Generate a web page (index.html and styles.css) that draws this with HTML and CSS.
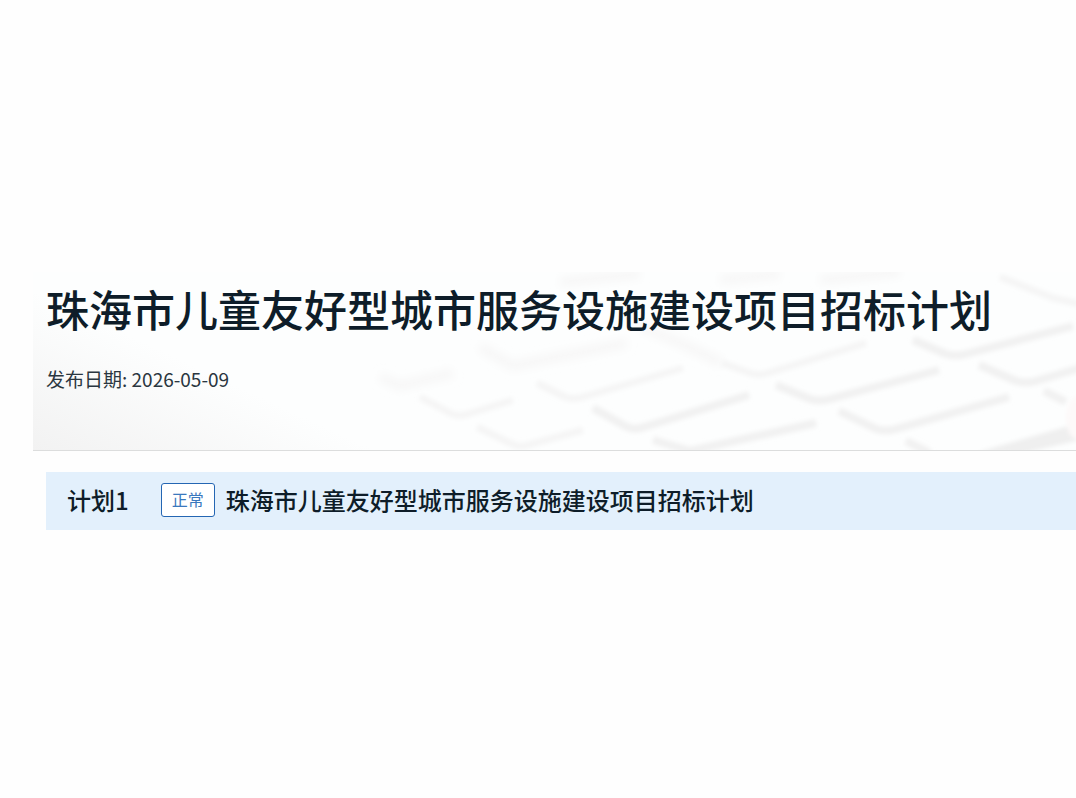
FILE: index.html
```html
<!DOCTYPE html>
<html lang="zh-CN">
<head>
  <meta charset="UTF-8" />
  <meta name="viewport" content="width=device-width, initial-scale=1" />
  <title>珠海市儿童友好型城市服务设施建设项目招标计划</title>
  <link rel="stylesheet" href="styles.css">
</head>
<body>
  <main class="page">
    <header class="banner">
      <!-- faded keyboard -->
      <svg class="banner-bg" viewBox="0 0 1043 178" preserveAspectRatio="xMaxYMax slice" aria-hidden="true">
        <defs>
          <filter id="soft" x="-5%" y="-10%" width="110%" height="120%"><feGaussianBlur stdDeviation="2" /></filter>
          <filter id="softer" x="-5%" y="-10%" width="110%" height="120%"><feGaussianBlur stdDeviation="4" /></filter>
        </defs>
        <g transform="translate(-33 -272)" fill="none" stroke-linejoin="round">
          <g filter="url(#softer)" stroke="#f7f7f7" stroke-width="10">
            <path d="M380 377L400 386L453 373" />
            <path d="M480 347L513 366L627 343" />
            <path d="M640 326L685 345L722 363" />
            <path d="M560 282L640 274M720 280L780 274M820 280L900 272" />
          </g>
          <g filter="url(#soft)" stroke="#f5f5f5" stroke-width="7">
            <path d="M420 397L452 414Q460 417 468 414L513 400" />
            <path d="M477 427L512 444Q520 448 528 445L583 430" />
            <path d="M537 383L565 397Q573 400 583 397L683 368" />
            <path d="M722 363L750 373Q759 376 768 373L866 343" />
            <path d="M1000 277L1053 298L1080 304" />
          </g>
          <g filter="url(#soft)" stroke="#f1f1f1" stroke-width="8">
            <path d="M593 408L625 426Q634 431 644 427L749 395" />
            <path d="M653 440L690 451L816 423" />
            <path d="M776 385L810 399Q819 402 830 399L939 370" />
            <path d="M839 411L876 429Q886 432 896 429L1009 397" />
            <path d="M913 340L946 354Q956 357 966 354L1073 326" />
            <path d="M979 365L1016 381Q1026 384 1036 381L1080 368" />
            <path d="M1044 391L1066 402" />
            <path d="M906 441L930 453" />
          </g>
          <path filter="url(#soft)" fill="#efefef" d="M978 452L1065 427L1080 424V440L1020 454Z" />
          <ellipse filter="url(#soft)" fill="#fdf9f9" cx="1078" cy="418" rx="12" ry="22" />
        </g>
      </svg>
      <h1 class="banner-title">珠海市儿童友好型城市服务设施建设项目招标计划</h1>
      <p class="banner-date">发布日期: <time datetime="2026-05-09">2026-05-09</time></p>
    </header>

    <section class="plan">
      <span class="plan-no">计划1</span>
      <span class="plan-status">正常</span>
      <h2 class="plan-name">珠海市儿童友好型城市服务设施建设项目招标计划</h2>
    </section>
  </main>
</body>
</html>
```
FILE: styles.css
```css
* {
  margin: 0;
  padding: 0;
  box-sizing: border-box;
}

body {
  background: #fefefe;
  color: #0e1d29;
  font-family: "Noto Sans CJK SC", sans-serif;
}

.page {
  padding: 272px 0 40px 33px;
}

.banner {
  position: relative;
  padding: 8px 13px 56px;
  border-bottom: 1px solid #dcdddd;
  background: linear-gradient(25deg, #f2f2f2, #fdfefe 24%);
}

.banner-bg {
  position: absolute;
  top: 0;
  left: 0;
  width: 100%;
  height: 100%;
}

.banner-title {
  position: relative;
  font-size: 43px;
  font-weight: 500;
  line-height: 56px;
  white-space: nowrap;
}

.banner-date {
  position: relative;
  margin-top: 29px;
  margin-bottom: 1px;
  color: #2a3640;
  font-size: 19px;
  font-weight: 400;
  line-height: 28px;
}

.plan {
  display: flex;
  align-items: center;
  margin: 21px 0 0 13px;
  padding: 9px 21px 11px;
  min-height: 58px;
  background: #e3f0fc;
}

.plan-no {
  margin-right: 32px;
  font-size: 24px;
  font-weight: 500;
  line-height: 36px;
}

.plan-status {
  margin-right: 11px;
  padding: 0 10px 2px;
  border: 1px solid #2466b3;
  border-radius: 3px;
  background: #fff;
  color: #3a78bd;
  font-size: 16px;
  font-weight: 400;
  line-height: 30px;
}

.plan-name {
  font-size: 24px;
  font-weight: 500;
  line-height: 36px;
  white-space: nowrap;
}
```
